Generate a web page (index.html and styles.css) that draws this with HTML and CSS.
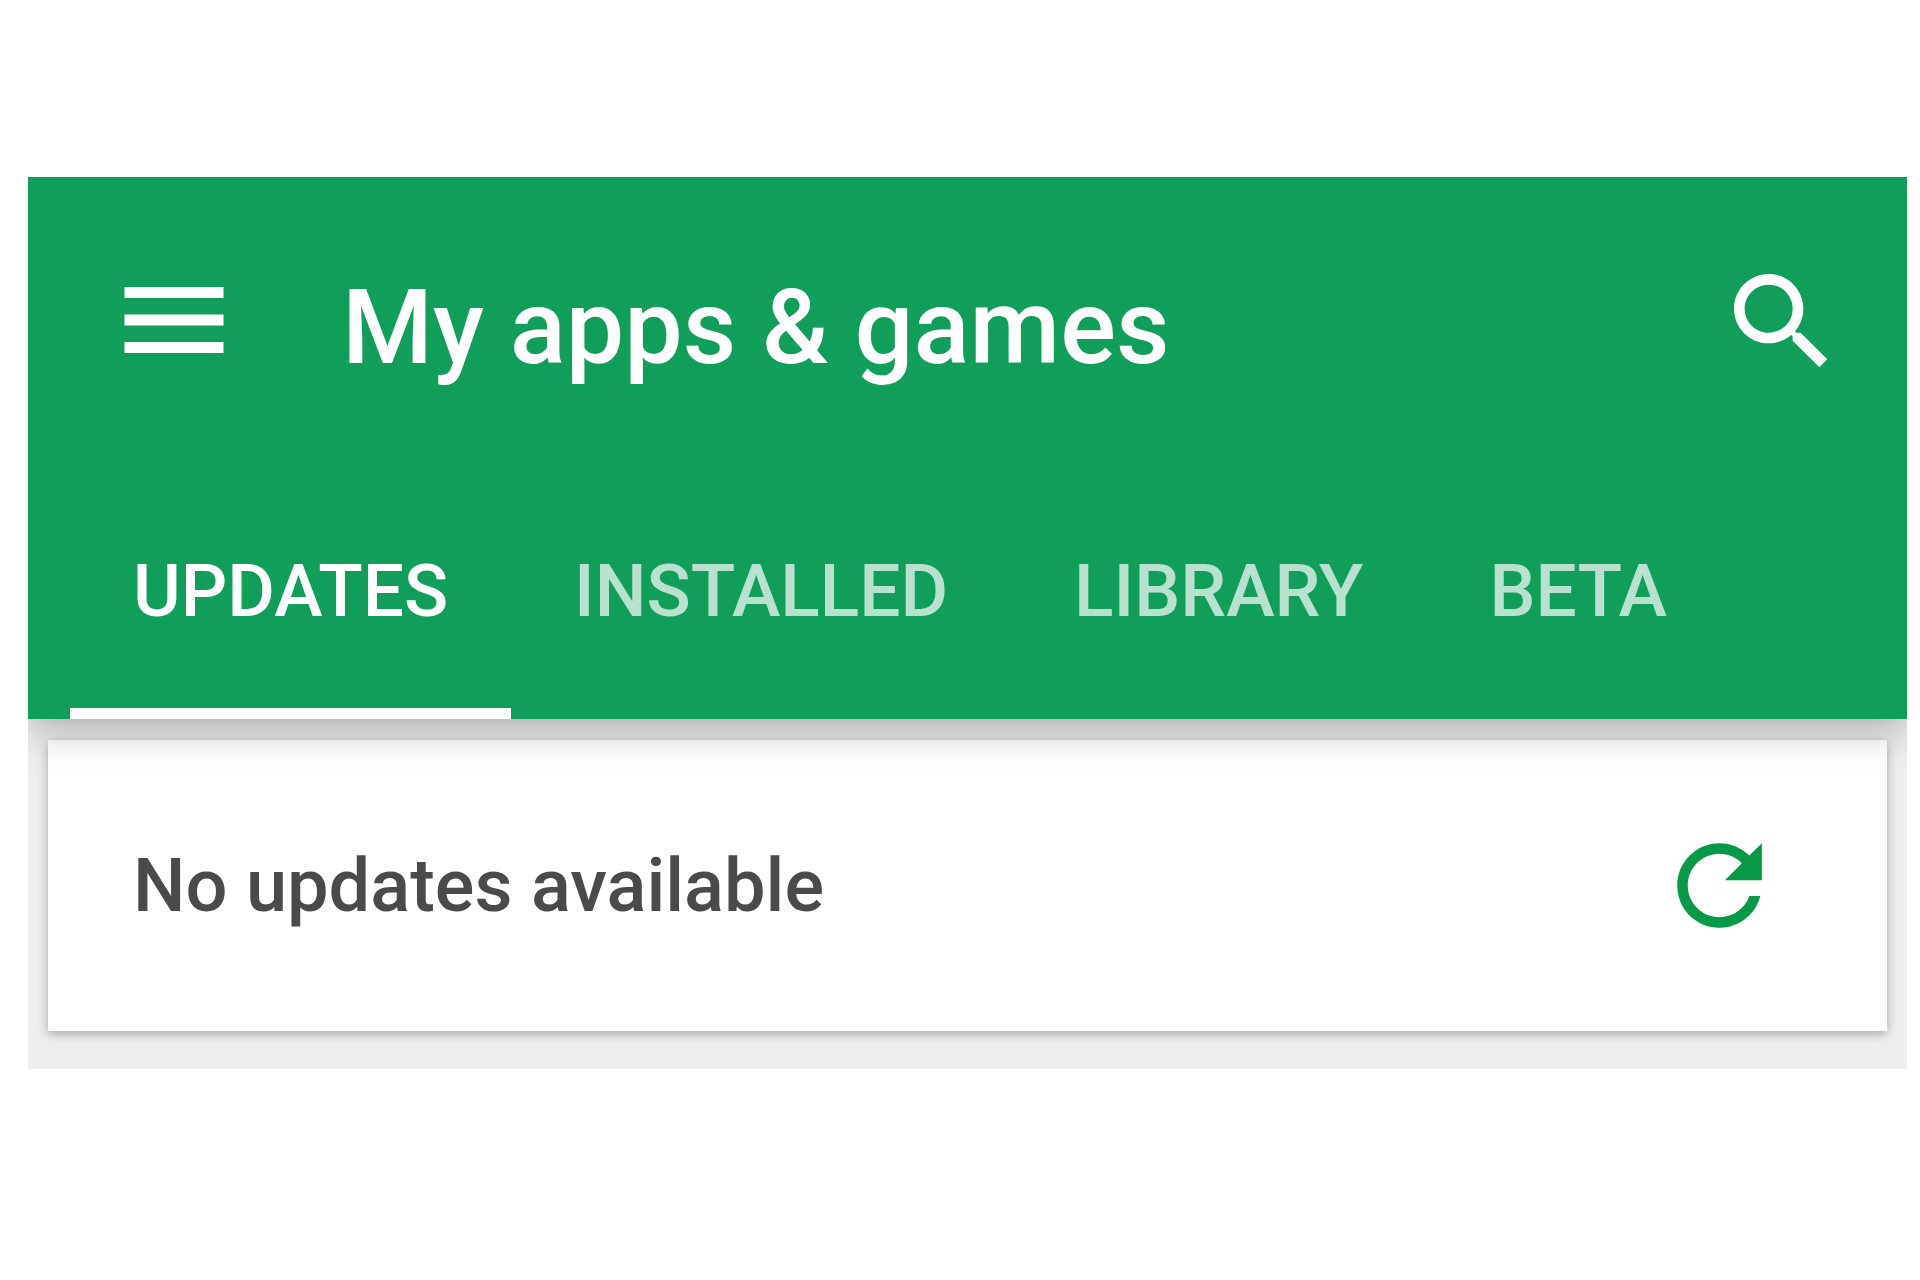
FILE: index.html
```html
<!DOCTYPE html>
<html lang="en">
<head>
    <meta charset="UTF-8">
    <meta name="viewport" content="width=device-width, initial-scale=1.0">
    <title>My apps &amp; games</title>
    <link rel="stylesheet" href="styles.css">
</head>
<body>
    <div class="app">
        <!-- Header with toolbar and tabs -->
        <header class="header">
            <div class="toolbar">
                <button class="icon-button menu-button" type="button" aria-label="Open menu">
                    <svg viewBox="0 0 24 24"><path d="M3 18h18v-2H3v2zm0-5h18v-2H3v2zm0-7v2h18V6H3z"/></svg>
                </button>
                <h1 class="title">My apps &amp; games</h1>
                <button class="icon-button search-button" type="button" aria-label="Search">
                    <svg viewBox="0 0 24 24"><path d="M15.5 14h-.79l-.28-.27C15.41 12.59 16 11.11 16 9.5 16 5.91 13.09 3 9.5 3S3 5.91 3 9.5 5.91 16 9.5 16c1.61 0 3.09-.59 4.23-1.57l.27.28v.79l5 4.99L20.49 19l-4.99-5zm-6 0C7.01 14 5 11.99 5 9.5S7.01 5 9.5 5 14 7.01 14 9.5 11.99 14 9.5 14z"/></svg>
                </button>
            </div>
            <nav class="tabs">
                <a class="tab active" href="#updates">UPDATES</a>
                <a class="tab" href="#installed">INSTALLED</a>
                <a class="tab" href="#library">LIBRARY</a>
                <a class="tab" href="#beta">BETA</a>
            </nav>
        </header>

        <!-- Updates tab -->
        <main class="content" id="updates">
            <div class="card">
                <p class="card-text">No updates available</p>
                <button class="icon-button refresh-button" type="button" aria-label="Refresh">
                    <svg viewBox="0 0 24 24"><path d="M17.65 6.35C16.2 4.9 14.21 4 12 4c-4.42 0-7.99 3.58-7.99 8s3.57 8 7.99 8c3.73 0 6.84-2.55 7.73-6h-2.08c-.82 2.33-3.04 4-5.65 4-3.31 0-6-2.69-6-6s2.69-6 6-6c1.66 0 3.14.69 4.22 1.78L13 11h7V4l-2.35 2.35z"/></svg>
                </button>
            </div>
        </main>
    </div>
</body>
</html>
```
FILE: styles.css
```css
body {
    margin: 0;
    padding: 177px 13px 0 28px;
    font-family: Roboto, Arial, sans-serif;
    font-weight: 500;
    background-color: #ffffff;
}

.app {
    background-color: #eeeeee;
    overflow: hidden;
}

.header {
    position: relative;
    z-index: 1;
    background-color: #119e5a;
    color: #ffffff;
    box-shadow: 0 12px 36px rgba(0, 0, 0, 0.26);
}

.toolbar {
    display: flex;
    align-items: flex-start;
    box-sizing: border-box;
    height: 286px;
    padding: 77px 61px 0 80px;
}

.icon-button {
    flex: none;
    padding: 0;
    border: none;
    background: none;
    color: inherit;
    cursor: pointer;
}

.icon-button svg {
    display: block;
    width: 100%;
    fill: currentColor;
}

.menu-button {
    width: 132px;
}

.search-button {
    width: 128px;
    margin-top: 4px;
}

.title {
    flex: 1;
    margin: 0 0 0 102px;
    font-size: 104px;
    font-weight: 500;
    line-height: 148px;
    white-space: nowrap;
}

.tabs {
    display: flex;
    padding-left: 42px;
}

.tab {
    position: relative;
    padding: 0 63px;
    font-size: 73px;
    line-height: 256px;
    color: rgba(255, 255, 255, 0.7);
    text-decoration: none;
}

.tab.active {
    color: #ffffff;
}

/* Indicator under the selected tab */
.tab.active::after {
    content: "";
    position: absolute;
    left: 0;
    right: 0;
    bottom: 0;
    height: 11px;
    background-color: #ffffff;
}

.content {
    padding: 21px 20px 38px;
}

.card {
    display: flex;
    align-items: center;
    justify-content: space-between;
    min-height: 291px;
    padding: 0 104px 0 85px;
    background-color: #ffffff;
    box-shadow: 0 3px 10px rgba(0, 0, 0, 0.3);
}

.card-text {
    margin: 0;
    font-size: 74px;
    line-height: 96px;
    color: #4a4a4a;
}

.refresh-button {
    width: 127px;
    color: #079848;
}
```
